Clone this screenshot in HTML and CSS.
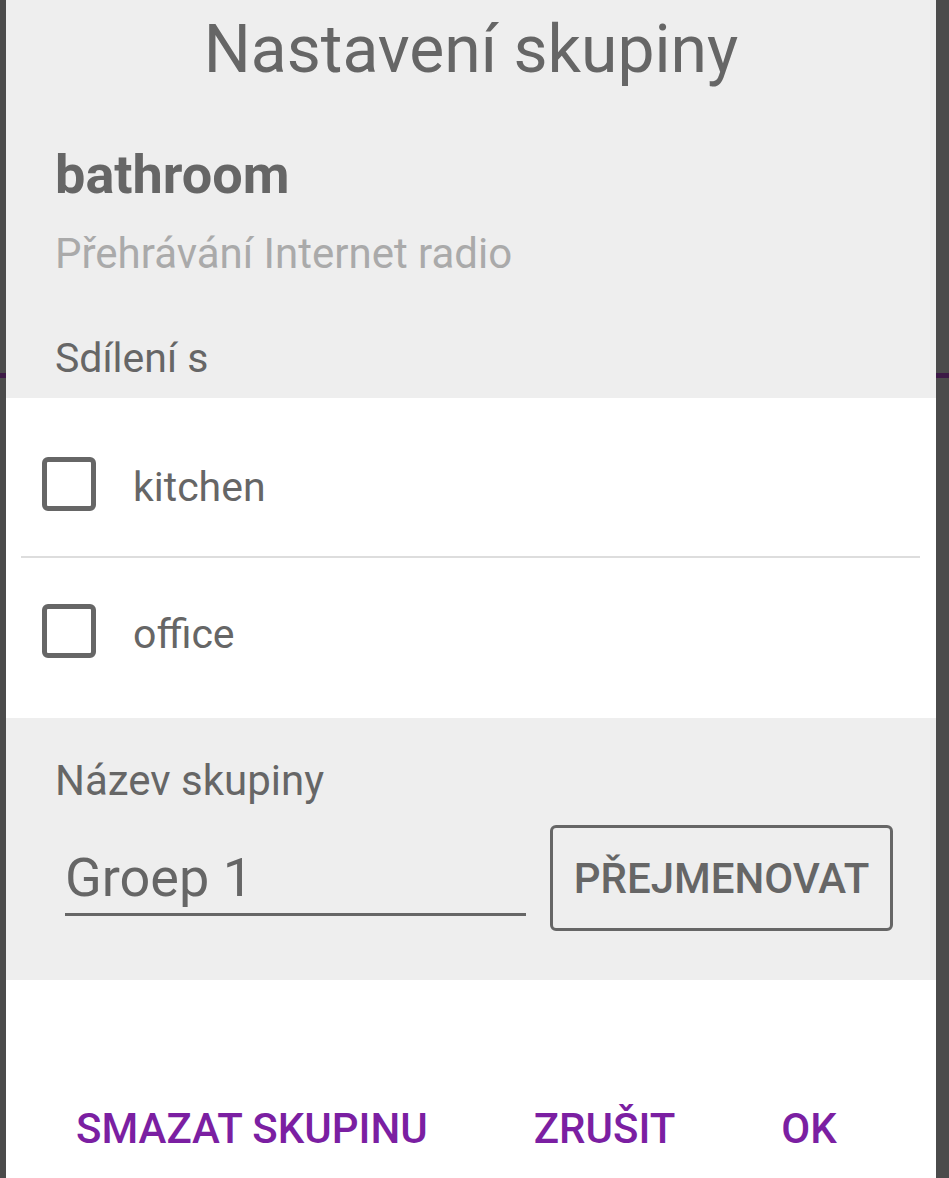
FILE: index.html
```html
<!DOCTYPE html>
<html lang="cs">
<head>
    <meta charset="UTF-8">
    <meta name="viewport" content="width=device-width, initial-scale=1.0">
    <title>Nastavení skupiny</title>
    <link rel="stylesheet" href="styles.css">
</head>
<body>

<!-- toolbar edge of the screen behind the dialog -->
<div class="backdrop-bar"></div>

<div class="dialog">
    <div class="head">
        <h1 class="title">Nastavení skupiny</h1>
        <div class="room">bathroom</div>
        <div class="status">Přehrávání Internet radio</div>
        <div class="label">Sdílení s</div>
    </div>

    <ul class="rooms">
        <li class="room-item">
            <span class="check"></span>
            <span class="room-name">kitchen</span>
        </li>
        <li class="room-item">
            <span class="check"></span>
            <span class="room-name">office</span>
        </li>
    </ul>

    <div class="rename">
        <div class="label">Název skupiny</div>
        <div class="rename-row">
            <input class="group-name" type="text" value="Groep 1">
            <button class="rename-button">PŘEJMENOVAT</button>
        </div>
    </div>

    <div class="actions">
        <button class="action">SMAZAT SKUPINU</button>
        <button class="action">ZRUŠIT</button>
        <button class="action">OK</button>
    </div>
</div>

</body>
</html>
```

FILE: styles.css
```css
body {
    margin: 0;
    background-color: #4b4b4b;
    font-family: Roboto, "Noto Sans", sans-serif;
    color: #666666;
}
.backdrop-bar {
    position: absolute;
    left: 0;
    right: 0;
    top: 373px;
    height: 5px;
    background-color: #3d1a46;
}
.dialog {
    position: relative;
    margin-left: 6px;
    width: 930px;
    background-color: #ffffff;
}

/* grey header */
.head {
    background-color: #eeeeee;
    padding: 10px 0 15px 49px;
}
.title {
    margin: 0 0 0 -49px;
    font-size: 66px;
    font-weight: 400;
    line-height: 80px;
    text-align: center;
}
.room {
    margin-top: 53px;
    font-size: 54px;
    font-weight: 700;
    line-height: 64px;
}
.status {
    margin-top: 22px;
    font-size: 42px;
    line-height: 50px;
    color: #aaaaaa;
}
.label {
    font-size: 41px;
    line-height: 50px;
}
.head .label {
    margin-top: 54px;
}
.rename .label {
    font-size: 42px;
}

/* rooms list */
.rooms {
    list-style: none;
    margin: 0;
    padding: 14px 0;
}
.room-item {
    display: flex;
    align-items: center;
    height: 146px;
    box-sizing: border-box;
    margin: 0 16px 0 15px;
    padding-left: 21px;
}
.room-item:first-child {
    border-bottom: 2px solid #dddddd;
}
.check {
    width: 54px;
    height: 54px;
    box-sizing: border-box;
    border: 5px solid #666666;
    border-radius: 6px;
}
.room-name {
    margin-left: 37px;
    padding-top: 6px;
    font-size: 41px;
    line-height: 50px;
}

/* rename block */
.rename {
    background-color: #eeeeee;
    padding: 38px 43px 49px 49px;
}
.rename-row {
    display: flex;
    align-items: flex-start;
    margin-top: 19px;
}
.group-name {
    width: 461px;
    height: 91px;
    box-sizing: border-box;
    margin-left: 10px;
    padding: 16px 0 0 0;
    border: none;
    border-bottom: 3px solid #666666;
    background: transparent;
    font-family: Roboto, "Noto Sans", sans-serif;
    font-size: 54px;
    color: #666666;
    outline: none;
}
.rename-button {
    margin-left: 24px;
    width: 343px;
    height: 106px;
    border: 3px solid #666666;
    border-radius: 6px;
    background: transparent;
    font-family: Roboto, "Noto Sans", sans-serif;
    font-size: 42px;
    font-weight: 500;
    color: #666666;
    padding: 0;
}

/* dialog buttons */
.actions {
    display: flex;
    gap: 106px;
    padding: 124px 0 60px 70px;
}
.action {
    border: none;
    background: none;
    padding: 0;
    font-family: Roboto, "Noto Sans", sans-serif;
    font-size: 42px;
    font-weight: 500;
    line-height: 50px;
    color: #7b1fa2;
}
```
